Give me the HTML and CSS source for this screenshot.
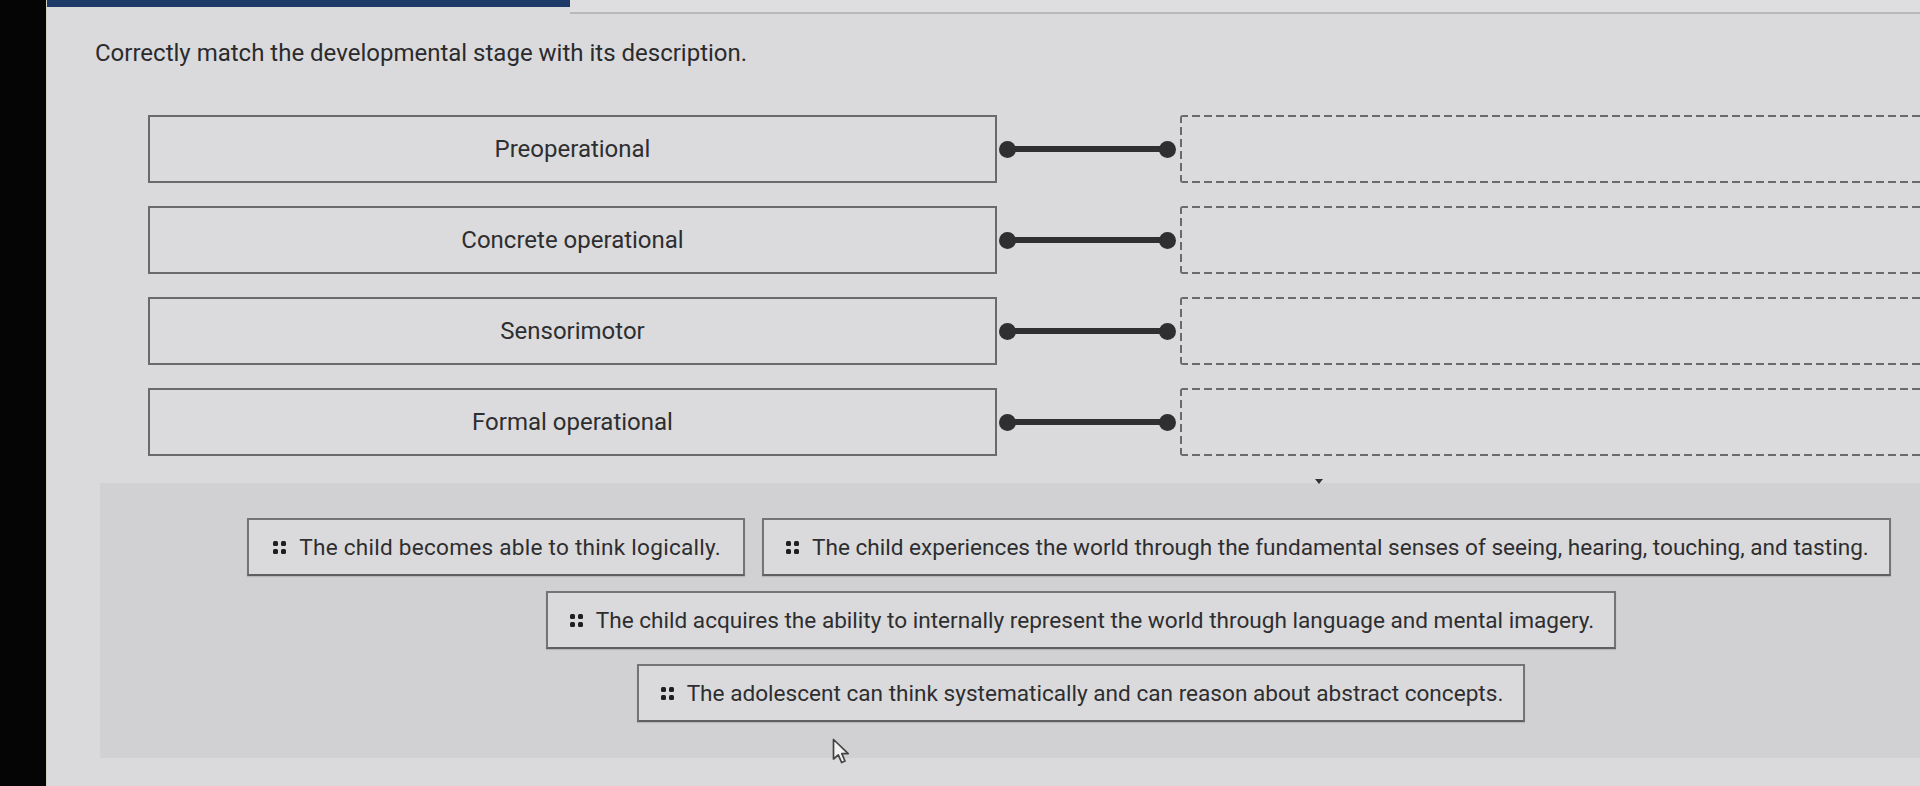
FILE: index.html
```html
<!DOCTYPE html>
<html lang="en">
<head>
<meta charset="utf-8">
<title>Match the developmental stage</title>
<link rel="stylesheet" href="styles.css">
</head>
<body>
<div class="bezel"></div>
<main class="screen">
  <div class="progress"><div class="progress-fill"></div><div class="progress-track"></div></div>
  <p class="title">Correctly match the developmental stage with its description.</p>

  <div class="matches">
    <div class="row">
      <div class="stage">Preoperational</div>
      <div class="connector"><span class="dot"></span><span class="bar"></span><span class="dot"></span></div>
      <div class="slot"></div>
    </div>
    <div class="row">
      <div class="stage">Concrete operational</div>
      <div class="connector"><span class="dot"></span><span class="bar"></span><span class="dot"></span></div>
      <div class="slot"></div>
    </div>
    <div class="row">
      <div class="stage">Sensorimotor</div>
      <div class="connector"><span class="dot"></span><span class="bar"></span><span class="dot"></span></div>
      <div class="slot"></div>
    </div>
    <div class="row">
      <div class="stage">Formal operational</div>
      <div class="connector"><span class="dot"></span><span class="bar"></span><span class="dot"></span></div>
      <div class="slot"></div>
    </div>
  </div>

  <div class="bank">
    <div class="bank-row bank-row-first">
      <div class="chip chip-wide"><span class="grip"><i></i><i></i><i></i><i></i></span><span>The child becomes able to think logically.</span></div>
      <div class="chip"><span class="grip"><i></i><i></i><i></i><i></i></span><span>The child experiences the world through the fundamental senses of seeing, hearing, touching, and tasting.</span></div>
    </div>
    <div class="bank-row">
      <div class="chip"><span class="grip"><i></i><i></i><i></i><i></i></span><span>The child acquires the ability to internally represent the world through language and mental imagery.</span></div>
    </div>
    <div class="bank-row">
      <div class="chip"><span class="grip"><i></i><i></i><i></i><i></i></span><span>The adolescent can think systematically and can reason about abstract concepts.</span></div>
    </div>
  </div>

  <span class="caret"></span>
  <svg class="cursor" width="20" height="28" viewBox="0 0 20 28" aria-hidden="true">
    <path d="M1.5 1.5 L1.5 21 L6.3 16.8 L9.6 24.5 L13 23 L9.8 15.6 L16.2 15.6 Z" fill="#f2f2f2" stroke="#444" stroke-width="1.7" stroke-linejoin="round"/>
  </svg>
</main>
</body>
</html>
```

FILE: styles.css
```css
* { box-sizing: border-box; }

html, body {
  margin: 0;
  height: 100%;
}

body {
  display: flex;
  overflow: hidden;
  background: #dadadc;
  font-family: Roboto, "Liberation Sans", sans-serif;
  color: #2e2e30;
}

.bezel {
  flex: 0 0 47px;
  background: #050505;
  border-right: 1px solid #cfcfc4;
}

.screen {
  position: relative;
  flex: 1 1 auto;
  min-width: 0;
  display: flex;
  flex-direction: column;
  background: #dadadc;
}

.progress {
  display: flex;
  height: 14px;
  flex-shrink: 0;
}

.progress-fill {
  width: 523px;
  height: 7px;
  background: #1e3a68;
}

.progress-track {
  flex: 1;
  border-bottom: 2px solid #b8b8bb;
  background: #dedee0;
}

.title {
  margin: 25px 0 0 48px;
  font-size: 24px;
  line-height: 28px;
  color: #2b2b2d;
}

.matches {
  margin: 48px 0 0 101px;
  display: flex;
  flex-direction: column;
  gap: 23px;
}

.row {
  display: flex;
  align-items: stretch;
  height: 68px;
}

.stage {
  flex: 0 0 849px;
  display: flex;
  align-items: center;
  justify-content: center;
  border: 2px solid #6a6a6d;
  background: #dbdbdd;
  font-size: 24px;
  color: #2e2e30;
}

.connector {
  flex: 0 0 183px;
  display: flex;
  align-items: center;
  padding: 0 4px 0 2px;
}

.dot {
  width: 17px;
  height: 17px;
  border-radius: 50%;
  background: #2f2f31;
  flex-shrink: 0;
}

.bar {
  flex: 1;
  height: 6px;
  margin: 0 -2px;
  background: #2f2f31;
}

.slot {
  flex: 0 0 860px;
  border-radius: 3px 0 0 3px;
  background:
    repeating-linear-gradient(90deg, #6a6a6d 0 8px, transparent 8px 12px) top left / 100% 2px no-repeat,
    repeating-linear-gradient(90deg, #6a6a6d 0 8px, transparent 8px 12px) bottom left / 100% 2px no-repeat,
    repeating-linear-gradient(180deg, #6a6a6d 0 8px, transparent 8px 12px) top left / 2px 100% no-repeat,
    #dbdbdd;
}

.bank {
  margin: 27px 0 0 53px;
  width: 1962px;
  flex-shrink: 0;
  padding: 35px 0 36px;
  background: #d1d1d3;
  display: flex;
  flex-direction: column;
  align-items: center;
  gap: 15px;
}

.bank-row {
  display: flex;
  gap: 17px;
}

.bank-row-first {
  margin-right: 24px;
}

.chip {
  display: flex;
  align-items: center;
  height: 58px;
  padding: 0 20px 0 22px;
  border: 2px solid #747477;
  border-bottom-color: #5f5f62;
  background: #dadadc;
  box-shadow: 0 1px 1px rgba(0, 0, 0, 0.12);
  font-size: 22.6px;
  color: #2e2e30;
  white-space: nowrap;
}

.chip-wide {
  padding-left: 24px;
  padding-right: 22px;
  letter-spacing: 0.25px;
}

.grip {
  display: grid;
  grid-template-columns: 5px 5px;
  grid-auto-rows: 5px;
  gap: 3px;
  margin-right: 13px;
}

.grip i {
  display: block;
  background: #1f1f21;
  border-radius: 1.5px;
}

.caret {
  position: absolute;
  left: 1268px;
  top: 479px;
  width: 0;
  height: 0;
  border-left: 4px solid transparent;
  border-right: 4px solid transparent;
  border-top: 5px solid #333;
}

.cursor {
  position: absolute;
  left: 785px;
  top: 738px;
}
```
